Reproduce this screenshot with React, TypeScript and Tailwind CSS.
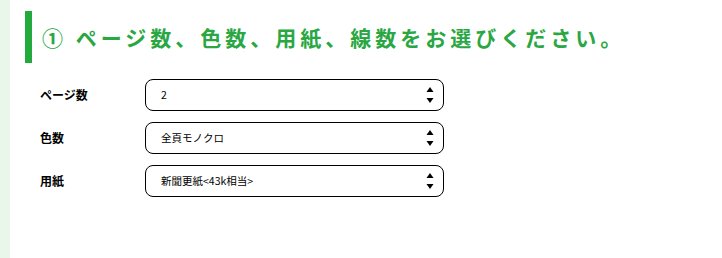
import React from "react";

const rows = [
  { label: "ページ数", value: "2" },
  { label: "色数", value: "全頁モノクロ" },
  { label: "用紙", value: "新聞更紙<43k相当>" },
];

function Arrows() {
  return (
    <svg width="8" height="16" viewBox="0 0 8 16" className="shrink-0">
      <polygon points="4,0 7.5,5 0.5,5" fill="#000" />
      <polygon points="0.5,11 7.5,11 4,16" fill="#000" />
    </svg>
  );
}

export default function App() {
  return (
    <div
      className="flex h-[258px] w-[722px] bg-white"
      style={{ fontFamily: '"Noto Sans CJK JP", "Noto Sans", sans-serif' }}
    >
      <div className="w-[10px] shrink-0 bg-[#e9f6ea]" />
      <div className="flex flex-1 flex-col pl-[15px] pt-[11px]">
        <div className="flex h-[52px] items-center border-l-[7px] border-[#22ab3c] pl-[10px]">
          <h1 className="text-[21px] font-bold leading-none tracking-[4px] text-[#2aa743]">
            ① ページ数、色数、用紙、線数をお選びください。
          </h1>
        </div>
        <div className="mt-[16px] flex flex-col gap-[11px] pl-[15px]">
          {rows.map((r) => (
            <div key={r.label} className="flex items-center">
              <div className="w-[105px] text-[12px] font-bold text-black">{r.label}</div>
              <div className="flex h-[32px] w-[299px] items-center justify-between rounded-[8px] border border-black pl-[15px] pr-[9px]">
                <span className="text-[10.5px] text-black">{r.value}</span>
                <Arrows />
              </div>
            </div>
          ))}
        </div>
      </div>
    </div>
  );
}
